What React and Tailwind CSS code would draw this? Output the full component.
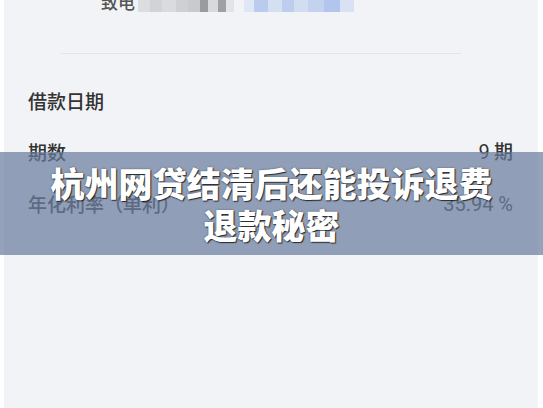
import React from "react";

const cjk = { fontFamily: '"Noto Sans CJK SC", "Noto Sans", sans-serif' };
const num = { fontFamily: 'Roboto, "Noto Sans CJK SC", sans-serif' };

// Mosaic blocks that mask the phone number
function Mosaic({ cells, className }) {
  return (
    <div className={"flex h-[12px] " + className}>
      {cells.map((c, i) => (
        <div key={i} className="h-full" style={{ width: c[0], background: c[1] }} />
      ))}
    </div>
  );
}

export default function App() {
  const gray = [
    [12, "#dcdde0"],
    [12, "#d2d3d6"],
    [14, "#dadbde"],
    [12, "#cfd0d3"],
    [12, "#c9cacd"],
    [8, "#9a9b9e"],
    [10, "#d8d9dc"],
    [8, "#9fa0a3"],
    [8, "#e3e4e7"],
  ];
  const blue = [
    [10, "#dfe6f4"],
    [14, "#b9cbee"],
    [14, "#d5dff2"],
    [12, "#bccdee"],
    [14, "#d3ddf1"],
    [16, "#c3d2ef"],
    [16, "#b2c6ed"],
    [14, "#d9e2f4"],
  ];

  return (
    <div className="relative w-[543px] h-[408px] bg-white overflow-hidden" style={cjk}>
      <div className="ml-[4px] w-[534px] h-full bg-[#f2f3f6] flex flex-col">
        <div className="flex items-start h-[12px] pl-[97px]">
          <span className="text-[17px] leading-none font-medium text-[#555] -mt-[7px]">致电</span>
          <Mosaic cells={gray} className="ml-[3px]" />
          <Mosaic cells={blue} className="ml-[10px] h-[11px]" />
        </div>
        <div className="mt-[41px] ml-[57px] w-[400px] h-[1px] bg-[#e3e4e7]" />
        <div className="mt-[36px] pl-[24px] text-[19px] leading-[22px] font-medium text-[#333]">借款日期</div>
        <div className="mt-[28px] pl-[24px] pr-[25px] flex justify-between items-center text-[19px] leading-[22px] font-medium text-[#333]">
          <span>期数</span>
          <span>
            <span style={num} className="text-[20px] font-normal">9</span> 期
          </span>
        </div>
        <div className="mt-[30px] pl-[24px] pr-[25px] flex justify-between items-center text-[19px] leading-[22px] font-medium text-[#444]">
          <span>年化利率（单利）</span>
          <span style={num} className="text-[20px] font-normal">35.94 %</span>
        </div>
      </div>

      <div className="absolute left-0 right-0 top-[152px] h-[103px] bg-[rgba(102,123,157,0.7)] flex flex-col items-center justify-center">
        <div
          className="text-white text-[34px] leading-[42px] font-black text-center"
          style={{ textShadow: "1px 1px 1px rgba(0,0,0,0.7), 0 0 2px rgba(0,0,0,0.45)" }}
        >
          <div>杭州网贷结清后还能投诉退费</div>
          <div>退款秘密</div>
        </div>
      </div>
    </div>
  );
}
